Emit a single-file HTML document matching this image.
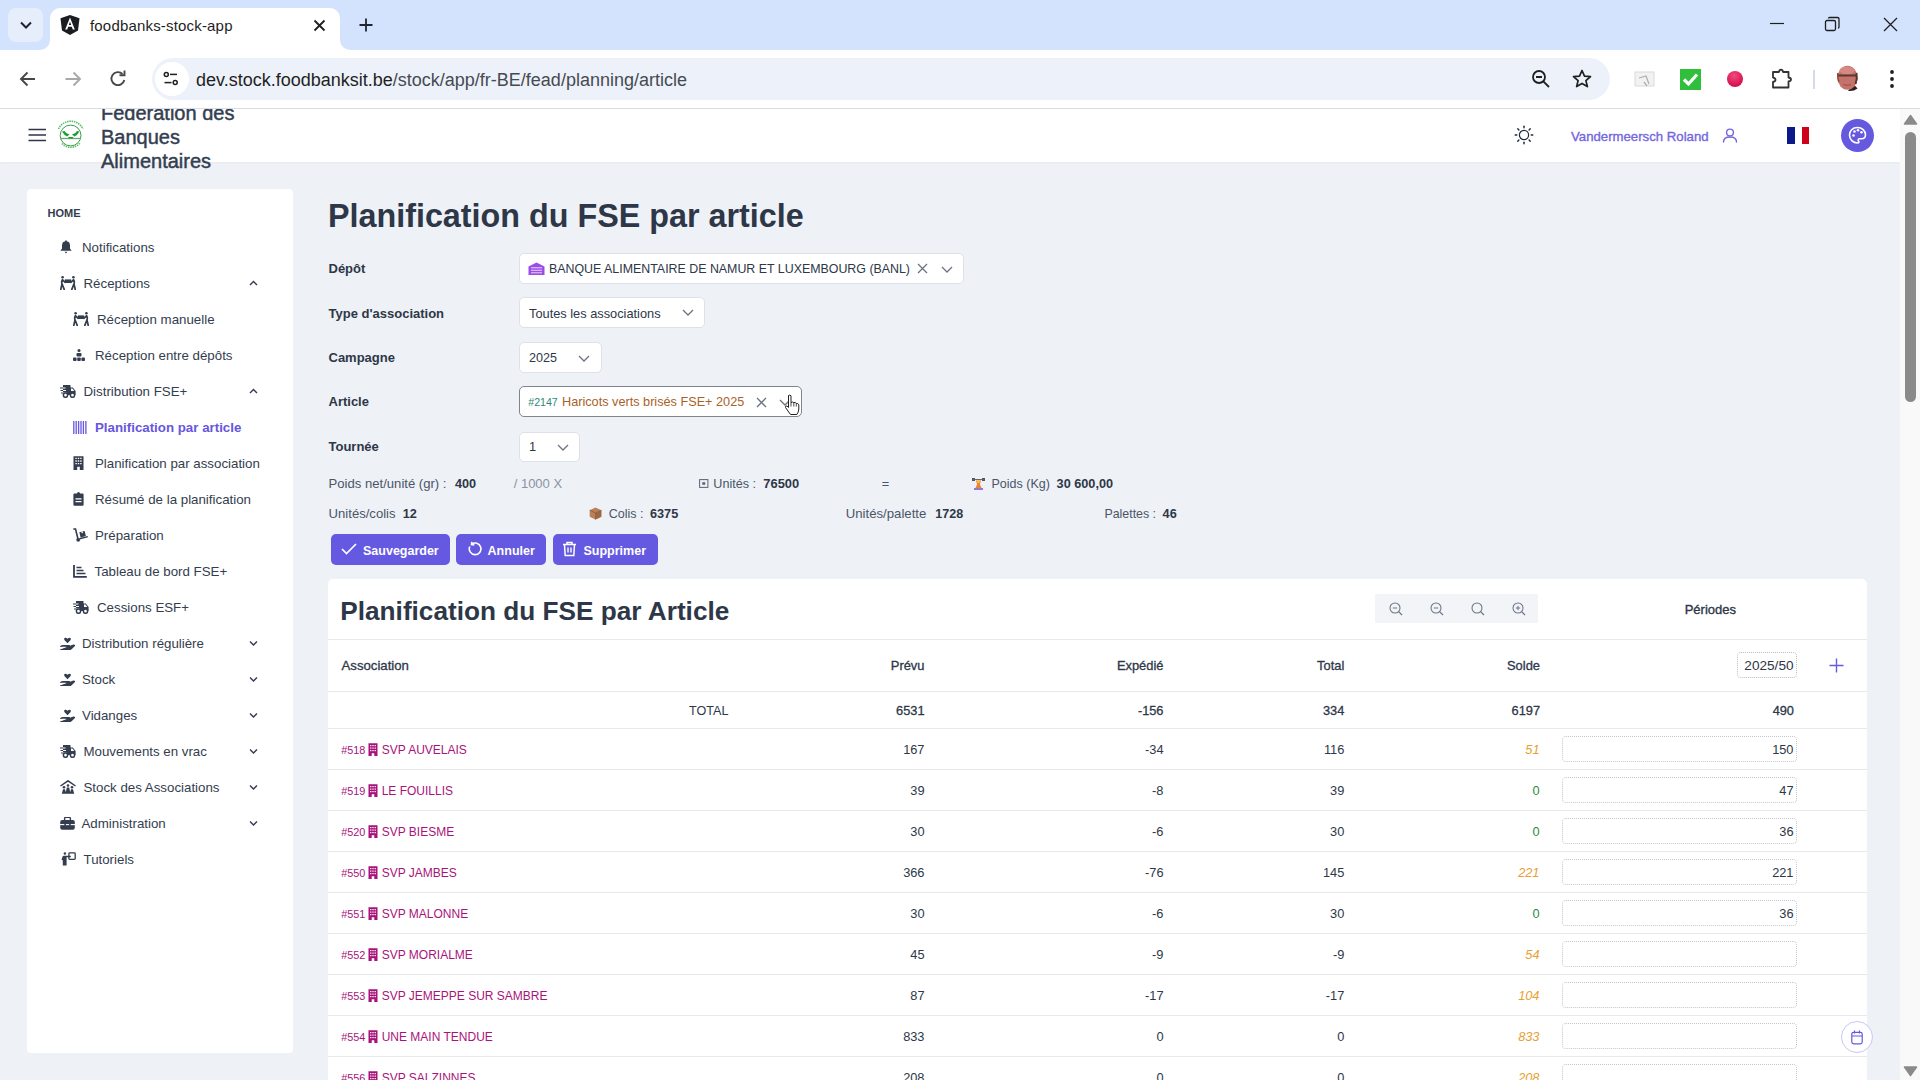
<!DOCTYPE html>
<html><head><meta charset="utf-8">
<style>
*{box-sizing:border-box;margin:0;padding:0}
html,body{width:1920px;height:1080px;overflow:hidden;background:#eef1f6;font-family:"Liberation Sans",sans-serif;color:#2d3748}
.abs{position:absolute}
.t{position:absolute;white-space:nowrap;line-height:1}
#tabbar{position:absolute;left:0;top:0;width:1920px;height:50px;background:#d3e3fd}
#toolbar{position:absolute;left:0;top:50px;width:1920px;height:58px;background:#fff}
#sep{position:absolute;left:0;top:108px;width:1920px;height:1px;background:#d8dce3}
#tab{position:absolute;left:50px;top:8px;width:290px;height:42px;background:#fff;border-radius:10px 10px 0 0}
#url{position:absolute;left:152px;top:58px;width:1458px;height:42px;background:#edf2fa;border-radius:21px}
#app{position:absolute;left:0;top:0;width:1920px;height:1080px;clip-path:inset(109px 0 0 0);background:#eef1f6}
#header{position:absolute;left:0;top:109px;width:1900px;height:53px;background:#fff;box-shadow:0 1px 2px rgba(30,40,60,0.04)}
#sidebar{position:absolute;left:27px;top:189px;width:266px;height:864px;background:#fff;border-radius:4px}
#scroll{position:absolute;left:1900px;top:109px;width:20px;height:971px;background:#f1f1f1}
</style></head><body>
<!-- CHROME -->
<div id="tabbar"></div>
<div class="abs" style="left:8px;top:8px;width:35px;height:34px;border-radius:8px;background:#e6eefc"></div>
<svg class="abs" style="left:18px;top:18px" width="16" height="14" viewBox="0 0 16 14"><path d="M3 4.5 L8 9.5 L13 4.5" fill="none" stroke="#1f2430" stroke-width="2"/></svg>
<div id="tab"></div>
<svg class="abs" style="left:40px;top:40px" width="10" height="10"><path d="M0 10 A10 10 0 0 0 10 0 V10 Z" fill="#fff"/></svg>
<svg class="abs" style="left:340px;top:40px" width="10" height="10"><path d="M10 10 A10 10 0 0 1 0 0 V10 Z" fill="#fff"/></svg>
<svg class="abs" style="left:59px;top:14px" width="22" height="22" viewBox="0 0 22 22"><path d="M11 1 L20.5 4.3 L19 16.5 L11 21 L3 16.5 L1.5 4.3 Z" fill="#1b1c20"/><path d="M11 3.5 L6.2 15.5 H8.2 L9.2 12.8 H12.8 L13.8 15.5 H15.8 Z M11 7.8 L12.2 11 H9.8 Z" fill="#fff"/></svg>
<div class="abs" style="left:90px;top:17px;font-size:15px;color:#1f1f1f;letter-spacing:0.18px">foodbanks-stock-app</div>
<svg class="abs" style="left:313px;top:19px" width="13" height="13" viewBox="0 0 13 13"><path d="M1.5 1.5 L11.5 11.5 M11.5 1.5 L1.5 11.5" stroke="#1f1f1f" stroke-width="1.8"/></svg>
<svg class="abs" style="left:358px;top:17px" width="16" height="16" viewBox="0 0 16 16"><path d="M8 1.5 V14.5 M1.5 8 H14.5" stroke="#1f2430" stroke-width="1.8"/></svg>
<svg class="abs" style="left:1769px;top:18px" width="16" height="10"><path d="M1 5.5 H15" stroke="#1f1f1f" stroke-width="1.2"/></svg>
<svg class="abs" style="left:1824px;top:16px" width="17" height="17" viewBox="0 0 17 17"><rect x="1.5" y="4.5" width="10" height="10" rx="1.5" fill="none" stroke="#1f1f1f" stroke-width="1.3"/><path d="M4.5 2.5 Q4.5 1.5 5.5 1.5 H13.5 Q15 1.5 15 3 V11 Q15 12 14 12" fill="none" stroke="#1f1f1f" stroke-width="1.3"/></svg>
<svg class="abs" style="left:1882px;top:16px" width="17" height="17" viewBox="0 0 17 17"><path d="M2 2 L15 15 M15 2 L2 15" stroke="#1f1f1f" stroke-width="1.3"/></svg>
<div id="toolbar"></div>
<svg class="abs" style="left:18px;top:69px" width="20" height="20" viewBox="0 0 20 20"><path d="M17 10 H4 M9.5 3.5 L3 10 L9.5 16.5" fill="none" stroke="#474747" stroke-width="1.9"/></svg>
<svg class="abs" style="left:63px;top:69px" width="20" height="20" viewBox="0 0 20 20"><path d="M2.5 10 H16 M10.5 3.5 L17 10 L10.5 16.5" fill="none" stroke="#a8a8a8" stroke-width="1.9"/></svg>
<svg class="abs" style="left:108px;top:69px" width="20" height="20" viewBox="0 0 20 20"><path d="M16.3 11 A6.5 6.5 0 1 1 14.5 5" fill="none" stroke="#474747" stroke-width="1.9"/><path d="M11.5 6.3 H16.5 V1.5" fill="none" stroke="#474747" stroke-width="1.9"/></svg>
<div id="url"></div>
<div class="abs" style="left:155px;top:62px;width:34px;height:34px;border-radius:17px;background:#fff"></div>
<svg class="abs" style="left:162px;top:70px" width="18" height="18" viewBox="0 0 18 18"><circle cx="4.3" cy="4.4" r="2" fill="none" stroke="#1f1f1f" stroke-width="1.5"/><path d="M8 4.4 H15" stroke="#1f1f1f" stroke-width="1.5"/><circle cx="13.2" cy="12.6" r="2" fill="none" stroke="#1f1f1f" stroke-width="1.5"/><path d="M2.5 12.6 H9.5" stroke="#1f1f1f" stroke-width="1.5"/></svg>
<div class="abs" id="urltext" style="left:196px;top:69.5px;font-size:18px;color:#1f1f1f;white-space:nowrap">dev.stock.foodbanksit.be<span style="color:#474a52">/stock/app/fr-BE/fead/planning/article</span></div>
<svg class="abs" style="left:1531px;top:69px" width="20" height="20" viewBox="0 0 20 20"><circle cx="8" cy="8" r="6" fill="none" stroke="#1f1f1f" stroke-width="1.8"/><path d="M12.3 12.3 L18 18 M5 8 H11" stroke="#1f1f1f" stroke-width="1.8"/></svg>
<svg class="abs" style="left:1571px;top:68px" width="22" height="22" viewBox="0 0 22 22"><path d="M11 2.5 L13.5 8.2 L19.5 8.6 L14.9 12.6 L16.4 18.6 L11 15.4 L5.6 18.6 L7.1 12.6 L2.5 8.6 L8.5 8.2 Z" fill="none" stroke="#1f1f1f" stroke-width="1.7" stroke-linejoin="round"/></svg>
<svg class="abs" style="left:1634px;top:70px" width="22" height="18" viewBox="0 0 22 18"><rect x="1" y="2" width="19" height="14" fill="#f2f2f2" stroke="#dadada"/><path d="M5 8 L12 6 L15 14 M10 12 L13 16" stroke="#b0b0b0" stroke-width="1.3" fill="none"/></svg>
<div class="abs" style="left:1680px;top:69px;width:21px;height:21px;background:#2fbf3a"></div>
<svg class="abs" style="left:1680px;top:69px" width="21" height="21" viewBox="0 0 21 21"><path d="M4 10.5 L8.5 15 L17 5.5" fill="none" stroke="#fff" stroke-width="3.2"/></svg>
<div class="abs" style="left:1727px;top:71px;width:16px;height:16px;border-radius:8px;background:radial-gradient(circle at 45% 30%,#f04a80,#d8104f 70%)"></div>
<svg class="abs" style="left:1770px;top:67px" width="23" height="23" viewBox="0 0 23 23"><path d="M3 5 H9 Q9.3 2.6 11 2.6 Q12.7 2.6 13 5 H18.5 V10.5 Q21 10.8 21 12.5 Q21 14.2 18.5 14.5 V20.5 H3 V14.8 Q5.5 14.5 5.5 12.7 Q5.5 10.9 3 10.6 Z" fill="none" stroke="#333" stroke-width="1.8" stroke-linejoin="round"/></svg>
<div class="abs" style="left:1813px;top:70px;width:2px;height:19px;background:#d3dbe8"></div>
<svg class="abs" style="left:1836px;top:65px" width="24" height="27" viewBox="0 0 24 27"><path d="M17.5 19 L21.5 23.5 Q18 26.5 12 26 Z" fill="#2a1f1c"/><ellipse cx="11.5" cy="12.8" rx="10" ry="12" fill="#c4726a"/><ellipse cx="11" cy="5.5" rx="7.5" ry="4" fill="#d48a82"/><path d="M2 10.5 H20.5" stroke="#5a3a30" stroke-width="2"/><path d="M1.8 8 Q1.5 14 3 17" stroke="#8a4a3a" stroke-width="1.5" fill="none"/><path d="M20.5 8 Q21.5 14 19.5 19" stroke="#5a3528" stroke-width="2" fill="none"/><path d="M7.5 19.5 Q11.5 21 15 19.5" stroke="#9a5050" stroke-width="1.2" fill="none"/></svg>
<svg class="abs" style="left:1886px;top:69px" width="12" height="20" viewBox="0 0 12 20"><circle cx="6" cy="3" r="1.9" fill="#1f1f1f"/><circle cx="6" cy="10" r="1.9" fill="#1f1f1f"/><circle cx="6" cy="17" r="1.9" fill="#1f1f1f"/></svg>
<div id="sep"></div>
<div id="app">
<!-- APP HEADER -->
<div id="header"></div>
<svg class="abs" style="left:28px;top:128px" width="19" height="14" viewBox="0 0 19 14"><path d="M0.5 1.5 H18 M0.5 7 H18 M0.5 12.5 H18" stroke="#2d3748" stroke-width="1.6"/></svg>
<svg class="abs" style="left:54px;top:119px" width="34" height="34" viewBox="0 0 34 34"><circle cx="16.6" cy="16.5" r="10.4" fill="none" stroke="#3a9a4a" stroke-width="1"/><path d="M4.5 10 A13.5 13.5 0 0 1 29 10" fill="none" stroke="#5cc06a" stroke-width="1.6" stroke-dasharray="1.5 0.8"/><path d="M8 24.5 A12 12 0 0 0 26 24" fill="none" stroke="#5cc06a" stroke-width="1.6" stroke-dasharray="1.5 0.8"/><path d="M6.5 19.5 H27" stroke="#6aa870" stroke-width="1.3"/><path d="M8 12.5 Q10 16 13 17.5 L15.5 15.5 Q12 15 10.5 12 Z M25.5 12.5 Q23.5 16 20.5 17.5 L18 15.5 Q21.5 15 23 12 Z M14 18 H19.5 L18.5 19.5 H15 Z" fill="#1aa033"/></svg>
<div class="t" style="left:101px;top:101px;font-size:20px;line-height:24px;color:#333e50;width:200px;white-space:normal;-webkit-text-stroke:0.45px #333e50">Fédération des<br>Banques<br>Alimentaires</div>
<!-- SIDEBAR -->
<div id="sidebar"></div>
<div class="t" style="left:47.5px;top:208px;font-size:11px;font-weight:700;color:#333d4e;">HOME</div>
<div class="abs" style="left:60px;top:240.0px;line-height:0"><svg width="12" height="14" viewBox="0 0 12 14"><path d="M6 0.3 Q6.8 0.3 6.8 1.2 Q10 1.8 10 5.5 V8.5 L11.6 10.8 H0.4 L2 8.5 V5.5 Q2 1.8 5.2 1.2 Q5.2 0.3 6 0.3 Z" fill="#333d4e"/><path d="M4.6 11.8 H7.4 L6 13.6 Z" fill="#333d4e"/></svg></div>
<div class="t" style="left:82px;top:241px;font-size:13.3px;font-weight:400;color:#333d4e;">Notifications</div>
<div class="abs" style="left:60px;top:276.0px;line-height:0"><svg width="16" height="14" viewBox="0 0 16 14"><circle cx="2.6" cy="1.3" r="1.3" fill="#333d4e"/><circle cx="13.4" cy="1.3" r="1.3" fill="#333d4e"/><rect x="4.8" y="3.4" width="6.4" height="3.6" fill="#333d4e"/><path d="M2.4 3.6 Q1.2 5.5 2 8 L0.8 13.4 M2.2 8.2 L4.2 13.4 M2.6 4 L5.2 6.3 M13.6 3.6 Q14.8 5.5 14 8 L15.2 13.4 M13.8 8.2 L11.8 13.4 M13.4 4 L10.8 6.3" stroke="#333d4e" stroke-width="1.7" fill="none" stroke-linecap="round"/></svg></div>
<div class="t" style="left:83.5px;top:277px;font-size:13.3px;font-weight:400;color:#333d4e;">Réceptions</div>
<svg class="abs" style="left:249px;top:279.5px" width="9" height="7" viewBox="0 0 9 7"><path d="M1 5 L4.5 1.5 L8 5" fill="none" stroke="#333d4e" stroke-width="1.4"/></svg>
<div class="abs" style="left:73px;top:312.0px;line-height:0"><svg width="16" height="14" viewBox="0 0 16 14"><circle cx="2.6" cy="1.3" r="1.3" fill="#333d4e"/><circle cx="13.4" cy="1.3" r="1.3" fill="#333d4e"/><rect x="4.8" y="3.4" width="6.4" height="3.6" fill="#333d4e"/><path d="M2.4 3.6 Q1.2 5.5 2 8 L0.8 13.4 M2.2 8.2 L4.2 13.4 M2.6 4 L5.2 6.3 M13.6 3.6 Q14.8 5.5 14 8 L15.2 13.4 M13.8 8.2 L11.8 13.4 M13.4 4 L10.8 6.3" stroke="#333d4e" stroke-width="1.7" fill="none" stroke-linecap="round"/></svg></div>
<div class="t" style="left:97px;top:313px;font-size:13.3px;font-weight:400;color:#333d4e;">Réception manuelle</div>
<div class="abs" style="left:73px;top:349.0px;line-height:0"><svg width="12" height="12" viewBox="0 0 12 12"><circle cx="6" cy="1.5" r="1.5" fill="#333d4e"/><rect x="3.5" y="4" width="5" height="3.5" rx="1" fill="#333d4e"/><rect x="0" y="8.5" width="3.6" height="3.5" rx="1" fill="#333d4e"/><rect x="4.2" y="8.5" width="3.6" height="3.5" rx="1" fill="#333d4e"/><rect x="8.4" y="8.5" width="3.6" height="3.5" rx="1" fill="#333d4e"/></svg></div>
<div class="t" style="left:95px;top:349px;font-size:13.3px;font-weight:400;color:#333d4e;">Réception entre dépôts</div>
<div class="abs" style="left:60px;top:384.0px;line-height:0"><svg width="16" height="14" viewBox="0 0 16 14"><path d="M3 1 H10.5 V3.5 H12.8 L15.6 7 V11 H3 Z" fill="#333d4e"/><path d="M0 4 H5.5 M0.5 6.5 H6 M1 9 H6.5" stroke="#fff" stroke-width="1.1"/><path d="M0 4 H3 M0.5 6.5 H3 M1 9 H3" stroke="#333d4e" stroke-width="1.1"/><circle cx="5.5" cy="11.2" r="2.1" fill="#fff" stroke="#333d4e" stroke-width="1.5"/><circle cx="12.5" cy="11.2" r="2.1" fill="#fff" stroke="#333d4e" stroke-width="1.5"/><path d="M11 4.6 H12.4 L14.3 7 H11 Z" fill="#fff"/></svg></div>
<div class="t" style="left:83.5px;top:385px;font-size:13.3px;font-weight:400;color:#333d4e;">Distribution FSE+</div>
<svg class="abs" style="left:249px;top:387.5px" width="9" height="7" viewBox="0 0 9 7"><path d="M1 5 L4.5 1.5 L8 5" fill="none" stroke="#333d4e" stroke-width="1.4"/></svg>
<div class="abs" style="left:73px;top:420.5px;line-height:0"><svg width="14" height="13" viewBox="0 0 14 13"><path d="M0.8 0 V13 M3.2 0 V13 M5.6 0 V13 M8 0 V13 M10.4 0 V13 M12.9 0 V13" stroke="#6656e0" stroke-width="1.3"/></svg></div>
<div class="t" style="left:95px;top:421px;font-size:13.3px;font-weight:700;color:#6656e0;">Planification par article</div>
<div class="abs" style="left:73px;top:456.0px;line-height:0"><svg width="11" height="14" viewBox="0 0 11 14"><path d="M0.5 0.3 H10.5 V14 H6.8 V10.8 H4.2 V14 H0.5 Z" fill="#333d4e"/><path d="M2.4 2.4 H3.8 M4.8 2.4 H6.2 M7.2 2.4 H8.6 M2.4 5 H3.8 M4.8 5 H6.2 M7.2 5 H8.6 M2.4 7.6 H3.8 M4.8 7.6 H6.2 M7.2 7.6 H8.6" stroke="#fff" stroke-width="1.3"/></svg></div>
<div class="t" style="left:95px;top:457px;font-size:13.3px;font-weight:400;color:#333d4e;">Planification par association</div>
<div class="abs" style="left:73px;top:492.0px;line-height:0"><svg width="11" height="14" viewBox="0 0 11 14"><path d="M1.5 1.5 H3.8 Q4.2 0 5.5 0 Q6.8 0 7.2 1.5 H9.5 Q10.6 1.5 10.6 2.6 V12.8 Q10.6 13.8 9.5 13.8 H1.5 Q0.4 13.8 0.4 12.8 V2.6 Q0.4 1.5 1.5 1.5 Z" fill="#333d4e"/><path d="M2.5 6.8 H8.5 M2.5 9.6 H8.5" stroke="#fff" stroke-width="1.2"/></svg></div>
<div class="t" style="left:95px;top:493px;font-size:13.3px;font-weight:400;color:#333d4e;">Résumé de la planification</div>
<div class="abs" style="left:73px;top:528.0px;line-height:0"><svg width="15" height="14" viewBox="0 0 15 14"><path d="M0.3 1 H2.5 L5 11" stroke="#333d4e" stroke-width="1.6" fill="none"/><circle cx="5.2" cy="11.8" r="1.9" fill="#333d4e"/><path d="M6.5 10.8 L14.8 8.6" stroke="#333d4e" stroke-width="1.5"/><path d="M6.3 4.3 L11.6 3 L12.9 8 L7.6 9.4 Z" fill="#333d4e"/><path d="M8.3 3.8 L9.6 3.5 L10 5 L8.7 5.3 Z" fill="#fff"/></svg></div>
<div class="t" style="left:95px;top:529px;font-size:13.3px;font-weight:400;color:#333d4e;">Préparation</div>
<div class="abs" style="left:73px;top:564.5px;line-height:0"><svg width="14" height="13" viewBox="0 0 14 13"><path d="M1 0 V11.8 H13.8" stroke="#333d4e" stroke-width="1.8" fill="none"/><path d="M3.5 2.5 H8.5 M3.5 5.5 H10.5 M3.5 8.5 H12.5" stroke="#333d4e" stroke-width="1.5"/></svg></div>
<div class="t" style="left:94.5px;top:565px;font-size:13.3px;font-weight:400;color:#333d4e;">Tableau de bord FSE+</div>
<div class="abs" style="left:73px;top:600.0px;line-height:0"><svg width="16" height="14" viewBox="0 0 16 14"><path d="M3 1 H10.5 V3.5 H12.8 L15.6 7 V11 H3 Z" fill="#333d4e"/><path d="M0 4 H5.5 M0.5 6.5 H6 M1 9 H6.5" stroke="#fff" stroke-width="1.1"/><path d="M0 4 H3 M0.5 6.5 H3 M1 9 H3" stroke="#333d4e" stroke-width="1.1"/><circle cx="5.5" cy="11.2" r="2.1" fill="#fff" stroke="#333d4e" stroke-width="1.5"/><circle cx="12.5" cy="11.2" r="2.1" fill="#fff" stroke="#333d4e" stroke-width="1.5"/><path d="M11 4.6 H12.4 L14.3 7 H11 Z" fill="#fff"/></svg></div>
<div class="t" style="left:97px;top:601px;font-size:13.3px;font-weight:400;color:#333d4e;">Cessions ESF+</div>
<div class="abs" style="left:60px;top:636.5px;line-height:0"><svg width="15" height="13" viewBox="0 0 15 13"><path d="M7.5 6.3 L4.6 3.3 Q3.6 2.1 4.5 1.1 Q5.6 0 7.5 1.7 Q9.4 0 10.5 1.1 Q11.4 2.1 10.4 3.3 Z" fill="#333d4e"/><path d="M0.3 9.6 Q1.5 8.6 3.5 8.6 H9 Q10 8.7 9.6 9.7 H6.5 M9.3 9.8 L12.8 8.2 Q14.4 7.8 14.6 8.6 L11 12 Q10.2 13 9 13 H0.3 Z" fill="#333d4e" stroke="#333d4e" stroke-width="1.1" stroke-linejoin="round"/></svg></div>
<div class="t" style="left:82px;top:637px;font-size:13.3px;font-weight:400;color:#333d4e;">Distribution régulière</div>
<svg class="abs" style="left:249px;top:639.5px" width="9" height="7" viewBox="0 0 9 7"><path d="M1 1.5 L4.5 5 L8 1.5" fill="none" stroke="#333d4e" stroke-width="1.4"/></svg>
<div class="abs" style="left:60px;top:672.5px;line-height:0"><svg width="15" height="13" viewBox="0 0 15 13"><path d="M7.5 6.3 L4.6 3.3 Q3.6 2.1 4.5 1.1 Q5.6 0 7.5 1.7 Q9.4 0 10.5 1.1 Q11.4 2.1 10.4 3.3 Z" fill="#333d4e"/><path d="M0.3 9.6 Q1.5 8.6 3.5 8.6 H9 Q10 8.7 9.6 9.7 H6.5 M9.3 9.8 L12.8 8.2 Q14.4 7.8 14.6 8.6 L11 12 Q10.2 13 9 13 H0.3 Z" fill="#333d4e" stroke="#333d4e" stroke-width="1.1" stroke-linejoin="round"/></svg></div>
<div class="t" style="left:82px;top:673px;font-size:13.3px;font-weight:400;color:#333d4e;">Stock</div>
<svg class="abs" style="left:249px;top:675.5px" width="9" height="7" viewBox="0 0 9 7"><path d="M1 1.5 L4.5 5 L8 1.5" fill="none" stroke="#333d4e" stroke-width="1.4"/></svg>
<div class="abs" style="left:60px;top:708.5px;line-height:0"><svg width="15" height="13" viewBox="0 0 15 13"><path d="M7.5 6.3 L4.6 3.3 Q3.6 2.1 4.5 1.1 Q5.6 0 7.5 1.7 Q9.4 0 10.5 1.1 Q11.4 2.1 10.4 3.3 Z" fill="#333d4e"/><path d="M0.3 9.6 Q1.5 8.6 3.5 8.6 H9 Q10 8.7 9.6 9.7 H6.5 M9.3 9.8 L12.8 8.2 Q14.4 7.8 14.6 8.6 L11 12 Q10.2 13 9 13 H0.3 Z" fill="#333d4e" stroke="#333d4e" stroke-width="1.1" stroke-linejoin="round"/></svg></div>
<div class="t" style="left:82px;top:709px;font-size:13.3px;font-weight:400;color:#333d4e;">Vidanges</div>
<svg class="abs" style="left:249px;top:711.5px" width="9" height="7" viewBox="0 0 9 7"><path d="M1 1.5 L4.5 5 L8 1.5" fill="none" stroke="#333d4e" stroke-width="1.4"/></svg>
<div class="abs" style="left:60px;top:744.0px;line-height:0"><svg width="16" height="14" viewBox="0 0 16 14"><path d="M3 1 H10.5 V3.5 H12.8 L15.6 7 V11 H3 Z" fill="#333d4e"/><path d="M0 4 H5.5 M0.5 6.5 H6 M1 9 H6.5" stroke="#fff" stroke-width="1.1"/><path d="M0 4 H3 M0.5 6.5 H3 M1 9 H3" stroke="#333d4e" stroke-width="1.1"/><circle cx="5.5" cy="11.2" r="2.1" fill="#fff" stroke="#333d4e" stroke-width="1.5"/><circle cx="12.5" cy="11.2" r="2.1" fill="#fff" stroke="#333d4e" stroke-width="1.5"/><path d="M11 4.6 H12.4 L14.3 7 H11 Z" fill="#fff"/></svg></div>
<div class="t" style="left:83.5px;top:745px;font-size:13.3px;font-weight:400;color:#333d4e;">Mouvements en vrac</div>
<svg class="abs" style="left:249px;top:747.5px" width="9" height="7" viewBox="0 0 9 7"><path d="M1 1.5 L4.5 5 L8 1.5" fill="none" stroke="#333d4e" stroke-width="1.4"/></svg>
<div class="abs" style="left:60px;top:780.0px;line-height:0"><svg width="16" height="14" viewBox="0 0 16 14"><path d="M0.5 6 L8 0.8 L15.5 6" stroke="#333d4e" stroke-width="1.5" fill="none"/><circle cx="4" cy="7.3" r="1.3" fill="#333d4e"/><circle cx="8" cy="5.5" r="1.3" fill="#333d4e"/><circle cx="12" cy="7.3" r="1.3" fill="#333d4e"/><path d="M1.8 13.8 L3 9.2 H5 L6.2 13.8 Z M5.5 13.8 L6.8 7.5 H9.2 L10.5 13.8 Z M9.8 13.8 L11 9.2 H13 L14.2 13.8 Z" fill="#333d4e"/></svg></div>
<div class="t" style="left:83.5px;top:781px;font-size:13.3px;font-weight:400;color:#333d4e;">Stock des Associations</div>
<svg class="abs" style="left:249px;top:783.5px" width="9" height="7" viewBox="0 0 9 7"><path d="M1 1.5 L4.5 5 L8 1.5" fill="none" stroke="#333d4e" stroke-width="1.4"/></svg>
<div class="abs" style="left:60px;top:816.5px;line-height:0"><svg width="15" height="13" viewBox="0 0 15 13"><path d="M4.6 3 V1.6 Q4.6 0.4 5.8 0.4 H9.2 Q10.4 0.4 10.4 1.6 V3" stroke="#333d4e" stroke-width="1.4" fill="none"/><rect x="0.2" y="3" width="14.6" height="9.8" rx="2" fill="#333d4e"/><path d="M0 7.6 H15" stroke="#fff" stroke-width="1.1"/><rect x="4.3" y="6.6" width="1.6" height="2.2" fill="#333d4e"/><rect x="9.1" y="6.6" width="1.6" height="2.2" fill="#333d4e"/></svg></div>
<div class="t" style="left:81.5px;top:817px;font-size:13.3px;font-weight:400;color:#333d4e;">Administration</div>
<svg class="abs" style="left:249px;top:819.5px" width="9" height="7" viewBox="0 0 9 7"><path d="M1 1.5 L4.5 5 L8 1.5" fill="none" stroke="#333d4e" stroke-width="1.4"/></svg>
<div class="abs" style="left:60px;top:851.5px;line-height:0"><svg width="16" height="15" viewBox="0 0 16 15"><circle cx="4.9" cy="1.5" r="1.2" fill="#333d4e"/><path d="M1.5 8 L2.6 4.6 Q2.9 3.8 3.8 3.8 H10.8 V5.2 H6.6 V13.5 H2.8 V8.2 Z" fill="#333d4e"/><rect x="8.9" y="0.9" width="6.3" height="6.5" rx="0.8" fill="none" stroke="#333d4e" stroke-width="1.3"/></svg></div>
<div class="t" style="left:83.5px;top:853px;font-size:13.3px;font-weight:400;color:#333d4e;">Tutoriels</div>
<!-- MAIN -->
<svg class="abs" style="left:1513px;top:124px" width="22" height="22" viewBox="0 0 22 22"><circle cx="11" cy="11" r="4.6" fill="none" stroke="#1f2937" stroke-width="1.2"/><path d="M18.20 11.00 L19.80 11.00" stroke="#1f2937" stroke-width="1.4" stroke-linecap="round"/><path d="M16.09 16.09 L17.22 17.22" stroke="#1f2937" stroke-width="1.4" stroke-linecap="round"/><path d="M11.00 18.20 L11.00 19.80" stroke="#1f2937" stroke-width="1.4" stroke-linecap="round"/><path d="M5.91 16.09 L4.78 17.22" stroke="#1f2937" stroke-width="1.4" stroke-linecap="round"/><path d="M3.80 11.00 L2.20 11.00" stroke="#1f2937" stroke-width="1.4" stroke-linecap="round"/><path d="M5.91 5.91 L4.78 4.78" stroke="#1f2937" stroke-width="1.4" stroke-linecap="round"/><path d="M11.00 3.80 L11.00 2.20" stroke="#1f2937" stroke-width="1.4" stroke-linecap="round"/><path d="M16.09 5.91 L17.22 4.78" stroke="#1f2937" stroke-width="1.4" stroke-linecap="round"/></svg>
<div class="t" style="left:1571px;top:130px;font-size:13.2px;font-weight:400;color:#7466e0;-webkit-text-stroke:0.35px #7466e0">Vandermeersch Roland</div>
<svg class="abs" style="left:1722px;top:128px" width="16" height="15" viewBox="0 0 16 15"><circle cx="8" cy="4.5" r="3.4" fill="none" stroke="#7466e0" stroke-width="1.4"/><path d="M1.5 14 Q1.5 9 8 9 Q14.5 9 14.5 14" fill="none" stroke="#7466e0" stroke-width="1.4" stroke-linecap="round"/></svg>
<div class="abs" style="left:1787px;top:127px;width:8px;height:17px;background:#0a1a8a"></div>
<div class="abs" style="left:1795px;top:127px;width:7px;height:17px;background:#fff"></div>
<div class="abs" style="left:1802px;top:127px;width:7px;height:17px;background:#d0021b"></div>
<div class="abs" style="left:1841px;top:119px;width:33px;height:33px;border-radius:50%;background:#6559e0"></div>
<svg class="abs" style="left:1847px;top:125px" width="21" height="21" viewBox="0 0 21 21"><path d="M10.5 2.5 C5.5 2.5 2.5 6 2.5 10 C2.5 14.5 6 18 10.5 18 C12 18 12.3 17 11.5 16 C10.8 15 11.3 13.8 12.6 13.8 H14.5 C16.8 13.8 18.5 12.2 18.5 9.8 C18.5 5.5 15 2.5 10.5 2.5 Z" fill="none" stroke="#fff" stroke-width="1.6"/><circle cx="6.5" cy="10.5" r="1.3" fill="#fff"/><circle cx="7.5" cy="6.5" r="1.3" fill="#fff"/><circle cx="11" cy="5.3" r="1.3" fill="#fff"/><circle cx="14.5" cy="7.3" r="1.3" fill="#fff"/></svg>
<div class="t" style="left:328px;top:200px;font-size:32.3px;font-weight:700;color:#2d3748;">Planification du FSE par article</div>
<div class="t" style="left:328.5px;top:262px;font-size:13px;font-weight:700;color:#2d3748;">Dépôt</div>
<div class="t" style="left:328.5px;top:307px;font-size:13px;font-weight:700;color:#2d3748;">Type d'association</div>
<div class="t" style="left:328.5px;top:351px;font-size:13px;font-weight:700;color:#2d3748;">Campagne</div>
<div class="t" style="left:328.5px;top:395px;font-size:13px;font-weight:700;color:#2d3748;">Article</div>
<div class="t" style="left:328.5px;top:440px;font-size:13px;font-weight:700;color:#2d3748;">Tournée</div>
<div class="abs" style="left:519px;top:253px;width:445px;height:31px;background:#fff;border:1px solid #dde2ea;border-radius:5px"></div>
<svg class="abs" style="left:528px;top:262px" width="17" height="13" viewBox="0 0 17 13"><path d="M0.5 4.5 L8.5 0.5 L16.5 4.5 V13 H0.5 Z" fill="#9b4de8"/><path d="M3 5.8 H14 M3 8.3 H14 M3 10.8 H14" stroke="#e9d8fb" stroke-width="1"/></svg>
<div class="t" style="left:549px;top:263px;font-size:12.4px;font-weight:400;color:#2d3748;">BANQUE ALIMENTAIRE DE NAMUR ET LUXEMBOURG (BANL)</div>
<svg class="abs" style="left:917px;top:263px" width="11" height="11" viewBox="0 0 11 11"><path d="M1 1 L10 10 M10 1 L1 10" stroke="#6b7280" stroke-width="1.3"/></svg>
<svg class="abs" style="left:941px;top:266px" width="12" height="7" viewBox="0 0 12 7"><path d="M1 1 L6 6 L11 1" fill="none" stroke="#6b7280" stroke-width="1.3"/></svg>
<div class="abs" style="left:519px;top:297px;width:186px;height:31px;background:#fff;border:1px solid #dde2ea;border-radius:5px"></div>
<div class="t" style="left:529px;top:308px;font-size:12.8px;font-weight:400;color:#2d3748;">Toutes les associations</div>
<svg class="abs" style="left:682px;top:309px" width="12" height="7" viewBox="0 0 12 7"><path d="M1 1 L6 6 L11 1" fill="none" stroke="#6b7280" stroke-width="1.3"/></svg>
<div class="abs" style="left:519px;top:342px;width:83px;height:31px;background:#fff;border:1px solid #dde2ea;border-radius:5px"></div>
<div class="t" style="left:529px;top:352px;font-size:12.6px;font-weight:400;color:#2d3748;">2025</div>
<svg class="abs" style="left:578px;top:355px" width="12" height="7" viewBox="0 0 12 7"><path d="M1 1 L6 6 L11 1" fill="none" stroke="#6b7280" stroke-width="1.3"/></svg>
<div class="abs" style="left:519px;top:386px;width:283px;height:31px;background:#fff;border:1px solid #80858d;border-radius:5px"></div>
<div class="t" style="left:528.3px;top:397px;font-size:10.6px;font-weight:400;color:#2e8a78;">#2147</div>
<div class="t" style="left:562px;top:396px;font-size:12.7px;font-weight:400;color:#a86228;">Haricots verts brisés FSE+ 2025</div>
<svg class="abs" style="left:756px;top:397px" width="11" height="11" viewBox="0 0 11 11"><path d="M1 1 L10 10 M10 1 L1 10" stroke="#6b7280" stroke-width="1.3"/></svg>
<svg class="abs" style="left:779px;top:399px" width="12" height="7" viewBox="0 0 12 7"><path d="M1 1 L6 6 L11 1" fill="none" stroke="#6b7280" stroke-width="1.3"/></svg>
<svg class="abs" style="left:784px;top:394px" width="16" height="22" viewBox="0 0 16 22"><path d="M4.5 1.5 Q6 0.5 7 1.8 V8.5 Q8.5 7.5 9.8 8.6 Q11.4 8 12.3 9.4 Q14 9 14.8 10.8 V15 Q14.8 18 12.8 20.5 H6.5 L1.5 13.5 Q1 11.8 3 12 L4.5 13.5 Z" fill="#fff" stroke="#222" stroke-width="1"/><path d="M7 8.5 V12.5 M9.8 8.6 V12.5 M12.3 9.4 V12.5" stroke="#222" stroke-width="0.8"/></svg>
<div class="abs" style="left:519px;top:432px;width:61px;height:30px;background:#fff;border:1px solid #dde2ea;border-radius:5px"></div>
<div class="t" style="left:529px;top:441px;font-size:12.8px;font-weight:400;color:#2d3748;">1</div>
<svg class="abs" style="left:557px;top:444px" width="12" height="7" viewBox="0 0 12 7"><path d="M1 1 L6 6 L11 1" fill="none" stroke="#6b7280" stroke-width="1.3"/></svg>
<div class="t" style="left:328.6px;top:477px;font-size:13.1px;font-weight:400;color:#4a5568;">Poids net/unité (gr) :</div>
<div class="t" style="left:455px;top:478px;font-size:12.7px;font-weight:700;color:#2d3748;">400</div>
<div class="t" style="left:513.7px;top:477px;font-size:13px;font-weight:400;color:#8a94a3;">/ 1000 X</div>
<svg class="abs" style="left:699px;top:479px" width="10" height="9" viewBox="0 0 10 9"><rect x="0.6" y="0.6" width="8.3" height="7.8" fill="none" stroke="#5a6474" stroke-width="1"/><rect x="3.3" y="3.2" width="2.9" height="2.6" fill="#5a6474"/></svg>
<div class="t" style="left:713.3px;top:478px;font-size:12.6px;font-weight:400;color:#4a5568;">Unités :</div>
<div class="t" style="left:763.3px;top:478px;font-size:12.9px;font-weight:700;color:#2d3748;">76500</div>
<div class="t" style="left:881.7px;top:478px;font-size:12.8px;font-weight:400;color:#4a5568;">=</div>
<svg class="abs" style="left:971px;top:476px" width="15" height="15" viewBox="0 0 15 15"><rect x="1" y="2" width="3" height="3" fill="#555"/><rect x="11" y="2" width="3" height="3" fill="#555"/><path d="M2.5 3.5 H12.5" stroke="#666" stroke-width="1"/><path d="M4.8 4.5 H10.2 L8.8 8 L10.5 12 H4.5 L6.2 8 Z" fill="#f0832a"/><circle cx="7.5" cy="5.5" r="1.4" fill="#f5c84c"/><path d="M3 13 H12" stroke="#7a5bd0" stroke-width="1.6"/></svg>
<div class="t" style="left:991.5px;top:478px;font-size:12.5px;font-weight:400;color:#4a5568;">Poids (Kg)</div>
<div class="t" style="left:1056.6px;top:478px;font-size:12.7px;font-weight:700;color:#2d3748;">30 600,00</div>
<div class="t" style="left:328.6px;top:507px;font-size:13.1px;font-weight:400;color:#4a5568;">Unités/colis</div>
<div class="t" style="left:402.8px;top:508px;font-size:12.7px;font-weight:700;color:#2d3748;">12</div>
<svg class="abs" style="left:589px;top:507px" width="13" height="13" viewBox="0 0 13 13"><path d="M6.5 0.5 L12.3 3.2 V9.8 L6.5 12.5 L0.7 9.8 V3.2 Z" fill="#b9805a"/><path d="M0.7 3.2 L6.5 6 L12.3 3.2 M6.5 6 V12.5" stroke="#8c5a3a" stroke-width="0.8" fill="none"/><path d="M6.5 6 L12.3 3.2 V9.8 L6.5 12.5 Z" fill="#9c6844"/></svg>
<div class="t" style="left:608.7px;top:508px;font-size:12.5px;font-weight:400;color:#4a5568;">Colis :</div>
<div class="t" style="left:650px;top:508px;font-size:12.7px;font-weight:700;color:#2d3748;">6375</div>
<div class="t" style="left:845.7px;top:507px;font-size:13.2px;font-weight:400;color:#4a5568;">Unités/palette</div>
<div class="t" style="left:935.3px;top:508px;font-size:12.5px;font-weight:700;color:#2d3748;">1728</div>
<div class="t" style="left:1104.4px;top:508px;font-size:12.4px;font-weight:400;color:#4a5568;">Palettes :</div>
<div class="t" style="left:1162.6px;top:508px;font-size:12.7px;font-weight:700;color:#2d3748;">46</div>
<div class="abs" style="left:331px;top:534px;width:119px;height:31px;background:#6459e0;border-radius:5px"></div>
<div class="abs" style="left:456px;top:534px;width:90px;height:31px;background:#6459e0;border-radius:5px"></div>
<div class="abs" style="left:553px;top:534px;width:105px;height:31px;background:#6459e0;border-radius:5px"></div>
<div class="t" style="left:363px;top:545px;font-size:12.5px;font-weight:700;color:#fff;">Sauvegarder</div>
<div class="t" style="left:487.6px;top:545px;font-size:12.5px;font-weight:700;color:#fff;">Annuler</div>
<div class="t" style="left:583.5px;top:545px;font-size:12.5px;font-weight:700;color:#fff;">Supprimer</div>
<svg class="abs" style="left:341px;top:543px" width="16" height="12" viewBox="0 0 16 12"><path d="M1 6 L5.5 10.5 L15 1" fill="none" stroke="#fff" stroke-width="1.7"/></svg>
<svg class="abs" style="left:466px;top:541px" width="16" height="16" viewBox="0 0 16 16"><path d="M3.8 5.5 A5.8 5.8 0 1 0 5.5 3.3" fill="none" stroke="#fff" stroke-width="1.6"/><path d="M5.8 0.8 L5.5 3.6 L8.4 4" fill="none" stroke="#fff" stroke-width="1.6"/></svg>
<svg class="abs" style="left:562px;top:541px" width="15" height="16" viewBox="0 0 15 16"><path d="M1 3.5 H14 M5 3.5 V1.5 H10 V3.5" fill="none" stroke="#fff" stroke-width="1.5"/><path d="M2.5 3.5 L3.2 14.5 H11.8 L12.5 3.5" fill="none" stroke="#fff" stroke-width="1.5"/><path d="M6 6.5 V11.5 M9 6.5 V11.5" stroke="#fff" stroke-width="1.4"/></svg>
<!-- TABLE -->
<div class="abs" style="left:328px;top:579px;width:1539px;height:511px;background:#fff;border-radius:5px"></div>
<div class="t" style="left:340.3px;top:598px;font-size:26.2px;font-weight:700;color:#2d3748;">Planification du FSE par Article</div>
<div class="abs" style="left:1375px;top:594px;width:163px;height:29px;background:#f2f4f8;border-radius:1px"></div>
<svg class="abs" style="left:1388.5px;top:602px" width="14" height="14" viewBox="0 0 14 14"><circle cx="6" cy="6" r="5" fill="none" stroke="#6b7486" stroke-width="1.05"/><path d="M9.6 9.6 L13 13" stroke="#6b7486" stroke-width="1.2"/><path d="M3.8 6 H8.2" stroke="#6b7486" stroke-width="1"/></svg>
<svg class="abs" style="left:1429.5px;top:602px" width="14" height="14" viewBox="0 0 14 14"><circle cx="6" cy="6" r="5" fill="none" stroke="#6b7486" stroke-width="1.05"/><path d="M9.6 9.6 L13 13" stroke="#6b7486" stroke-width="1.2"/><path d="M3.8 6 H8.2" stroke="#6b7486" stroke-width="1"/></svg>
<svg class="abs" style="left:1470.5px;top:602px" width="14" height="14" viewBox="0 0 14 14"><circle cx="6" cy="6" r="5" fill="none" stroke="#6b7486" stroke-width="1.05"/><path d="M9.6 9.6 L13 13" stroke="#6b7486" stroke-width="1.2"/></svg>
<svg class="abs" style="left:1511.5px;top:602px" width="14" height="14" viewBox="0 0 14 14"><circle cx="6" cy="6" r="5" fill="none" stroke="#6b7486" stroke-width="1.05"/><path d="M9.6 9.6 L13 13" stroke="#6b7486" stroke-width="1.2"/><path d="M3.8 6 H8.2" stroke="#6b7486" stroke-width="1"/><path d="M6 3.8 V8.2" stroke="#6b7486" stroke-width="1"/></svg>
<div class="t" style="left:1684.7px;top:603px;font-size:13px;font-weight:400;color:#2d3748;-webkit-text-stroke:0.35px #2d3748">Périodes</div>
<div class="abs" style="left:328px;top:639px;width:1539px;height:1px;background:#e5e8ed"></div>
<div class="t" style="left:341.5px;top:659px;font-size:13.2px;font-weight:400;color:#2d3748;-webkit-text-stroke:0.3px #2d3748">Association</div>
<div class="t" style="right:995.5px;top:660px;font-size:12.9px;font-weight:400;color:#2d3748;-webkit-text-stroke:0.3px #2d3748">Prévu</div>
<div class="t" style="right:756.5px;top:660px;font-size:12.9px;font-weight:400;color:#2d3748;-webkit-text-stroke:0.3px #2d3748">Expédié</div>
<div class="t" style="right:575.7px;top:660px;font-size:12.9px;font-weight:400;color:#2d3748;-webkit-text-stroke:0.3px #2d3748">Total</div>
<div class="t" style="right:380px;top:660px;font-size:12.9px;font-weight:400;color:#2d3748;-webkit-text-stroke:0.3px #2d3748">Solde</div>
<div class="abs" style="left:1737px;top:652px;width:60px;height:26px;border:1px dotted #b8bec8;border-radius:4px"></div>
<div class="t" style="right:126.5px;top:659px;font-size:13.6px;font-weight:400;color:#2d3748;">2025/50</div>
<svg class="abs" style="left:1829px;top:658px" width="15" height="15" viewBox="0 0 15 15"><path d="M7.5 0.5 V14.5 M0.5 7.5 H14.5" stroke="#6559e0" stroke-width="1.4"/></svg>
<div class="abs" style="left:328px;top:691px;width:1539px;height:1px;background:#e5e8ed"></div>
<div class="t" style="right:1191.5px;top:705px;font-size:12.6px;font-weight:400;color:#2d3748;">TOTAL</div>
<div class="t" style="right:995.5px;top:705px;font-size:12.8px;font-weight:400;color:#2d3748;-webkit-text-stroke:0.3px #2d3748">6531</div>
<div class="t" style="right:756.5px;top:705px;font-size:12.8px;font-weight:400;color:#2d3748;-webkit-text-stroke:0.3px #2d3748">-156</div>
<div class="t" style="right:575.7px;top:705px;font-size:12.8px;font-weight:400;color:#2d3748;-webkit-text-stroke:0.3px #2d3748">334</div>
<div class="t" style="right:380px;top:705px;font-size:12.8px;font-weight:400;color:#2d3748;-webkit-text-stroke:0.3px #2d3748">6197</div>
<div class="t" style="right:126px;top:705px;font-size:12.8px;font-weight:400;color:#2d3748;-webkit-text-stroke:0.3px #2d3748">490</div>
<div class="abs" style="left:328px;top:728px;width:1539px;height:1px;background:#e5e8ed"></div>
<div class="t" style="left:341.2px;top:745px;font-size:10.9px;font-weight:400;color:#a8137a;">#518</div>
<svg class="abs" style="left:368px;top:742.5px" width="10" height="13" viewBox="0 0 10 13"><path d="M0.5 0.3 H9.5 V13 H6.3 V10.2 H3.7 V13 H0.5 Z" fill="#a8127a"/><rect x="2.1" y="2" width="1.3" height="1.2" fill="#fff"/><rect x="2.1" y="4.5" width="1.3" height="1.2" fill="#fff"/><rect x="2.1" y="7" width="1.3" height="1.2" fill="#fff"/><rect x="4.35" y="2" width="1.3" height="1.2" fill="#fff"/><rect x="4.35" y="4.5" width="1.3" height="1.2" fill="#fff"/><rect x="4.35" y="7" width="1.3" height="1.2" fill="#fff"/><rect x="6.6" y="2" width="1.3" height="1.2" fill="#fff"/><rect x="6.6" y="4.5" width="1.3" height="1.2" fill="#fff"/><rect x="6.6" y="7" width="1.3" height="1.2" fill="#fff"/></svg>
<div class="t" style="left:381.7px;top:744px;font-size:12.0px;font-weight:400;color:#a8137a;">SVP AUVELAIS</div>
<div class="t" style="right:995.5px;top:744px;font-size:12.8px;font-weight:400;color:#2d3748;">167</div>
<div class="t" style="right:756.5px;top:744px;font-size:12.8px;font-weight:400;color:#2d3748;">-34</div>
<div class="t" style="right:575.7px;top:744px;font-size:12.8px;font-weight:400;color:#2d3748;">116</div>
<div class="t" style="right:380.5px;top:744px;font-size:12.8px;font-weight:400;color:#e6a135;font-style:italic">51</div>
<div class="abs" style="left:1562px;top:736px;width:235px;height:25.5px;border:1px dotted #c3c8d0;border-radius:4px;background:#fff"></div>
<div class="t" style="right:126.5px;top:744px;font-size:12.8px;font-weight:400;color:#2d3748;">150</div>
<div class="abs" style="left:328px;top:769px;width:1539px;height:1px;background:#e5e8ed"></div>
<div class="t" style="left:341.2px;top:786px;font-size:10.9px;font-weight:400;color:#a8137a;">#519</div>
<svg class="abs" style="left:368px;top:783.5px" width="10" height="13" viewBox="0 0 10 13"><path d="M0.5 0.3 H9.5 V13 H6.3 V10.2 H3.7 V13 H0.5 Z" fill="#a8127a"/><rect x="2.1" y="2" width="1.3" height="1.2" fill="#fff"/><rect x="2.1" y="4.5" width="1.3" height="1.2" fill="#fff"/><rect x="2.1" y="7" width="1.3" height="1.2" fill="#fff"/><rect x="4.35" y="2" width="1.3" height="1.2" fill="#fff"/><rect x="4.35" y="4.5" width="1.3" height="1.2" fill="#fff"/><rect x="4.35" y="7" width="1.3" height="1.2" fill="#fff"/><rect x="6.6" y="2" width="1.3" height="1.2" fill="#fff"/><rect x="6.6" y="4.5" width="1.3" height="1.2" fill="#fff"/><rect x="6.6" y="7" width="1.3" height="1.2" fill="#fff"/></svg>
<div class="t" style="left:381.7px;top:785px;font-size:12.0px;font-weight:400;color:#a8137a;">LE FOUILLIS</div>
<div class="t" style="right:995.5px;top:785px;font-size:12.8px;font-weight:400;color:#2d3748;">39</div>
<div class="t" style="right:756.5px;top:785px;font-size:12.8px;font-weight:400;color:#2d3748;">-8</div>
<div class="t" style="right:575.7px;top:785px;font-size:12.8px;font-weight:400;color:#2d3748;">39</div>
<div class="t" style="right:380.5px;top:785px;font-size:12.8px;font-weight:400;color:#2f8a3c;">0</div>
<div class="abs" style="left:1562px;top:777px;width:235px;height:25.5px;border:1px dotted #c3c8d0;border-radius:4px;background:#fff"></div>
<div class="t" style="right:126.5px;top:785px;font-size:12.8px;font-weight:400;color:#2d3748;">47</div>
<div class="abs" style="left:328px;top:810px;width:1539px;height:1px;background:#e5e8ed"></div>
<div class="t" style="left:341.2px;top:827px;font-size:10.9px;font-weight:400;color:#a8137a;">#520</div>
<svg class="abs" style="left:368px;top:824.5px" width="10" height="13" viewBox="0 0 10 13"><path d="M0.5 0.3 H9.5 V13 H6.3 V10.2 H3.7 V13 H0.5 Z" fill="#a8127a"/><rect x="2.1" y="2" width="1.3" height="1.2" fill="#fff"/><rect x="2.1" y="4.5" width="1.3" height="1.2" fill="#fff"/><rect x="2.1" y="7" width="1.3" height="1.2" fill="#fff"/><rect x="4.35" y="2" width="1.3" height="1.2" fill="#fff"/><rect x="4.35" y="4.5" width="1.3" height="1.2" fill="#fff"/><rect x="4.35" y="7" width="1.3" height="1.2" fill="#fff"/><rect x="6.6" y="2" width="1.3" height="1.2" fill="#fff"/><rect x="6.6" y="4.5" width="1.3" height="1.2" fill="#fff"/><rect x="6.6" y="7" width="1.3" height="1.2" fill="#fff"/></svg>
<div class="t" style="left:381.7px;top:826px;font-size:12.0px;font-weight:400;color:#a8137a;">SVP BIESME</div>
<div class="t" style="right:995.5px;top:826px;font-size:12.8px;font-weight:400;color:#2d3748;">30</div>
<div class="t" style="right:756.5px;top:826px;font-size:12.8px;font-weight:400;color:#2d3748;">-6</div>
<div class="t" style="right:575.7px;top:826px;font-size:12.8px;font-weight:400;color:#2d3748;">30</div>
<div class="t" style="right:380.5px;top:826px;font-size:12.8px;font-weight:400;color:#2f8a3c;">0</div>
<div class="abs" style="left:1562px;top:818px;width:235px;height:25.5px;border:1px dotted #c3c8d0;border-radius:4px;background:#fff"></div>
<div class="t" style="right:126.5px;top:826px;font-size:12.8px;font-weight:400;color:#2d3748;">36</div>
<div class="abs" style="left:328px;top:851px;width:1539px;height:1px;background:#e5e8ed"></div>
<div class="t" style="left:341.2px;top:868px;font-size:10.9px;font-weight:400;color:#a8137a;">#550</div>
<svg class="abs" style="left:368px;top:865.5px" width="10" height="13" viewBox="0 0 10 13"><path d="M0.5 0.3 H9.5 V13 H6.3 V10.2 H3.7 V13 H0.5 Z" fill="#a8127a"/><rect x="2.1" y="2" width="1.3" height="1.2" fill="#fff"/><rect x="2.1" y="4.5" width="1.3" height="1.2" fill="#fff"/><rect x="2.1" y="7" width="1.3" height="1.2" fill="#fff"/><rect x="4.35" y="2" width="1.3" height="1.2" fill="#fff"/><rect x="4.35" y="4.5" width="1.3" height="1.2" fill="#fff"/><rect x="4.35" y="7" width="1.3" height="1.2" fill="#fff"/><rect x="6.6" y="2" width="1.3" height="1.2" fill="#fff"/><rect x="6.6" y="4.5" width="1.3" height="1.2" fill="#fff"/><rect x="6.6" y="7" width="1.3" height="1.2" fill="#fff"/></svg>
<div class="t" style="left:381.7px;top:867px;font-size:12.0px;font-weight:400;color:#a8137a;">SVP JAMBES</div>
<div class="t" style="right:995.5px;top:867px;font-size:12.8px;font-weight:400;color:#2d3748;">366</div>
<div class="t" style="right:756.5px;top:867px;font-size:12.8px;font-weight:400;color:#2d3748;">-76</div>
<div class="t" style="right:575.7px;top:867px;font-size:12.8px;font-weight:400;color:#2d3748;">145</div>
<div class="t" style="right:380.5px;top:867px;font-size:12.8px;font-weight:400;color:#e6a135;font-style:italic">221</div>
<div class="abs" style="left:1562px;top:859px;width:235px;height:25.5px;border:1px dotted #c3c8d0;border-radius:4px;background:#fff"></div>
<div class="t" style="right:126.5px;top:867px;font-size:12.8px;font-weight:400;color:#2d3748;">221</div>
<div class="abs" style="left:328px;top:892px;width:1539px;height:1px;background:#e5e8ed"></div>
<div class="t" style="left:341.2px;top:909px;font-size:10.9px;font-weight:400;color:#a8137a;">#551</div>
<svg class="abs" style="left:368px;top:906.5px" width="10" height="13" viewBox="0 0 10 13"><path d="M0.5 0.3 H9.5 V13 H6.3 V10.2 H3.7 V13 H0.5 Z" fill="#a8127a"/><rect x="2.1" y="2" width="1.3" height="1.2" fill="#fff"/><rect x="2.1" y="4.5" width="1.3" height="1.2" fill="#fff"/><rect x="2.1" y="7" width="1.3" height="1.2" fill="#fff"/><rect x="4.35" y="2" width="1.3" height="1.2" fill="#fff"/><rect x="4.35" y="4.5" width="1.3" height="1.2" fill="#fff"/><rect x="4.35" y="7" width="1.3" height="1.2" fill="#fff"/><rect x="6.6" y="2" width="1.3" height="1.2" fill="#fff"/><rect x="6.6" y="4.5" width="1.3" height="1.2" fill="#fff"/><rect x="6.6" y="7" width="1.3" height="1.2" fill="#fff"/></svg>
<div class="t" style="left:381.7px;top:908px;font-size:12.0px;font-weight:400;color:#a8137a;">SVP MALONNE</div>
<div class="t" style="right:995.5px;top:908px;font-size:12.8px;font-weight:400;color:#2d3748;">30</div>
<div class="t" style="right:756.5px;top:908px;font-size:12.8px;font-weight:400;color:#2d3748;">-6</div>
<div class="t" style="right:575.7px;top:908px;font-size:12.8px;font-weight:400;color:#2d3748;">30</div>
<div class="t" style="right:380.5px;top:908px;font-size:12.8px;font-weight:400;color:#2f8a3c;">0</div>
<div class="abs" style="left:1562px;top:900px;width:235px;height:25.5px;border:1px dotted #c3c8d0;border-radius:4px;background:#fff"></div>
<div class="t" style="right:126.5px;top:908px;font-size:12.8px;font-weight:400;color:#2d3748;">36</div>
<div class="abs" style="left:328px;top:933px;width:1539px;height:1px;background:#e5e8ed"></div>
<div class="t" style="left:341.2px;top:950px;font-size:10.9px;font-weight:400;color:#a8137a;">#552</div>
<svg class="abs" style="left:368px;top:947.5px" width="10" height="13" viewBox="0 0 10 13"><path d="M0.5 0.3 H9.5 V13 H6.3 V10.2 H3.7 V13 H0.5 Z" fill="#a8127a"/><rect x="2.1" y="2" width="1.3" height="1.2" fill="#fff"/><rect x="2.1" y="4.5" width="1.3" height="1.2" fill="#fff"/><rect x="2.1" y="7" width="1.3" height="1.2" fill="#fff"/><rect x="4.35" y="2" width="1.3" height="1.2" fill="#fff"/><rect x="4.35" y="4.5" width="1.3" height="1.2" fill="#fff"/><rect x="4.35" y="7" width="1.3" height="1.2" fill="#fff"/><rect x="6.6" y="2" width="1.3" height="1.2" fill="#fff"/><rect x="6.6" y="4.5" width="1.3" height="1.2" fill="#fff"/><rect x="6.6" y="7" width="1.3" height="1.2" fill="#fff"/></svg>
<div class="t" style="left:381.7px;top:949px;font-size:12.0px;font-weight:400;color:#a8137a;">SVP MORIALME</div>
<div class="t" style="right:995.5px;top:949px;font-size:12.8px;font-weight:400;color:#2d3748;">45</div>
<div class="t" style="right:756.5px;top:949px;font-size:12.8px;font-weight:400;color:#2d3748;">-9</div>
<div class="t" style="right:575.7px;top:949px;font-size:12.8px;font-weight:400;color:#2d3748;">-9</div>
<div class="t" style="right:380.5px;top:949px;font-size:12.8px;font-weight:400;color:#e6a135;font-style:italic">54</div>
<div class="abs" style="left:1562px;top:941px;width:235px;height:25.5px;border:1px dotted #c3c8d0;border-radius:4px;background:#fff"></div>
<div class="abs" style="left:328px;top:974px;width:1539px;height:1px;background:#e5e8ed"></div>
<div class="t" style="left:341.2px;top:991px;font-size:10.9px;font-weight:400;color:#a8137a;">#553</div>
<svg class="abs" style="left:368px;top:988.5px" width="10" height="13" viewBox="0 0 10 13"><path d="M0.5 0.3 H9.5 V13 H6.3 V10.2 H3.7 V13 H0.5 Z" fill="#a8127a"/><rect x="2.1" y="2" width="1.3" height="1.2" fill="#fff"/><rect x="2.1" y="4.5" width="1.3" height="1.2" fill="#fff"/><rect x="2.1" y="7" width="1.3" height="1.2" fill="#fff"/><rect x="4.35" y="2" width="1.3" height="1.2" fill="#fff"/><rect x="4.35" y="4.5" width="1.3" height="1.2" fill="#fff"/><rect x="4.35" y="7" width="1.3" height="1.2" fill="#fff"/><rect x="6.6" y="2" width="1.3" height="1.2" fill="#fff"/><rect x="6.6" y="4.5" width="1.3" height="1.2" fill="#fff"/><rect x="6.6" y="7" width="1.3" height="1.2" fill="#fff"/></svg>
<div class="t" style="left:381.7px;top:990px;font-size:12.0px;font-weight:400;color:#a8137a;">SVP JEMEPPE SUR SAMBRE</div>
<div class="t" style="right:995.5px;top:990px;font-size:12.8px;font-weight:400;color:#2d3748;">87</div>
<div class="t" style="right:756.5px;top:990px;font-size:12.8px;font-weight:400;color:#2d3748;">-17</div>
<div class="t" style="right:575.7px;top:990px;font-size:12.8px;font-weight:400;color:#2d3748;">-17</div>
<div class="t" style="right:380.5px;top:990px;font-size:12.8px;font-weight:400;color:#e6a135;font-style:italic">104</div>
<div class="abs" style="left:1562px;top:982px;width:235px;height:25.5px;border:1px dotted #c3c8d0;border-radius:4px;background:#fff"></div>
<div class="abs" style="left:328px;top:1015px;width:1539px;height:1px;background:#e5e8ed"></div>
<div class="t" style="left:341.2px;top:1032px;font-size:10.9px;font-weight:400;color:#a8137a;">#554</div>
<svg class="abs" style="left:368px;top:1029.5px" width="10" height="13" viewBox="0 0 10 13"><path d="M0.5 0.3 H9.5 V13 H6.3 V10.2 H3.7 V13 H0.5 Z" fill="#a8127a"/><rect x="2.1" y="2" width="1.3" height="1.2" fill="#fff"/><rect x="2.1" y="4.5" width="1.3" height="1.2" fill="#fff"/><rect x="2.1" y="7" width="1.3" height="1.2" fill="#fff"/><rect x="4.35" y="2" width="1.3" height="1.2" fill="#fff"/><rect x="4.35" y="4.5" width="1.3" height="1.2" fill="#fff"/><rect x="4.35" y="7" width="1.3" height="1.2" fill="#fff"/><rect x="6.6" y="2" width="1.3" height="1.2" fill="#fff"/><rect x="6.6" y="4.5" width="1.3" height="1.2" fill="#fff"/><rect x="6.6" y="7" width="1.3" height="1.2" fill="#fff"/></svg>
<div class="t" style="left:381.7px;top:1031px;font-size:12.0px;font-weight:400;color:#a8137a;">UNE MAIN TENDUE</div>
<div class="t" style="right:995.5px;top:1031px;font-size:12.8px;font-weight:400;color:#2d3748;">833</div>
<div class="t" style="right:756.5px;top:1031px;font-size:12.8px;font-weight:400;color:#2d3748;">0</div>
<div class="t" style="right:575.7px;top:1031px;font-size:12.8px;font-weight:400;color:#2d3748;">0</div>
<div class="t" style="right:380.5px;top:1031px;font-size:12.8px;font-weight:400;color:#e6a135;font-style:italic">833</div>
<div class="abs" style="left:1562px;top:1023px;width:235px;height:25.5px;border:1px dotted #c3c8d0;border-radius:4px;background:#fff"></div>
<div class="abs" style="left:328px;top:1056px;width:1539px;height:1px;background:#e5e8ed"></div>
<div class="t" style="left:341.2px;top:1073px;font-size:10.9px;font-weight:400;color:#a8137a;">#556</div>
<svg class="abs" style="left:368px;top:1070.5px" width="10" height="13" viewBox="0 0 10 13"><path d="M0.5 0.3 H9.5 V13 H6.3 V10.2 H3.7 V13 H0.5 Z" fill="#a8127a"/><rect x="2.1" y="2" width="1.3" height="1.2" fill="#fff"/><rect x="2.1" y="4.5" width="1.3" height="1.2" fill="#fff"/><rect x="2.1" y="7" width="1.3" height="1.2" fill="#fff"/><rect x="4.35" y="2" width="1.3" height="1.2" fill="#fff"/><rect x="4.35" y="4.5" width="1.3" height="1.2" fill="#fff"/><rect x="4.35" y="7" width="1.3" height="1.2" fill="#fff"/><rect x="6.6" y="2" width="1.3" height="1.2" fill="#fff"/><rect x="6.6" y="4.5" width="1.3" height="1.2" fill="#fff"/><rect x="6.6" y="7" width="1.3" height="1.2" fill="#fff"/></svg>
<div class="t" style="left:381.7px;top:1072px;font-size:12.0px;font-weight:400;color:#a8137a;">SVP SALZINNES</div>
<div class="t" style="right:995.5px;top:1072px;font-size:12.8px;font-weight:400;color:#2d3748;">208</div>
<div class="t" style="right:756.5px;top:1072px;font-size:12.8px;font-weight:400;color:#2d3748;">0</div>
<div class="t" style="right:575.7px;top:1072px;font-size:12.8px;font-weight:400;color:#2d3748;">0</div>
<div class="t" style="right:380.5px;top:1072px;font-size:12.8px;font-weight:400;color:#e6a135;font-style:italic">208</div>
<div class="abs" style="left:1562px;top:1064px;width:235px;height:25.5px;border:1px dotted #c3c8d0;border-radius:4px;background:#fff"></div>
<div class="abs" style="left:1841.4px;top:1021.4px;width:32px;height:32px;border-radius:50%;border:1px solid #cbc5f5;background:#fff"></div>
<svg class="abs" style="left:1851px;top:1030px" width="12" height="15" viewBox="0 0 12 15"><rect x="0.8" y="2.3" width="10.4" height="11.5" rx="1.8" fill="none" stroke="#6559e0" stroke-width="1.2"/><path d="M0.8 6 H11.2 M3.5 0.5 V3.5 M8.5 0.5 V3.5" stroke="#6559e0" stroke-width="1.2"/></svg>
<!-- SCROLLBAR -->
<div class="abs" style="left:1900px;top:109px;width:20px;height:971px;background:#f9f9fa"></div>
<svg class="abs" style="left:1903px;top:114px" width="15" height="12" viewBox="0 0 15 12"><path d="M7.5 1.5 L13.5 10 H1.5 Z" fill="#8a8a8a" stroke="#8a8a8a" stroke-width="1.5" stroke-linejoin="round"/></svg>
<div class="abs" style="left:1905px;top:132px;width:11px;height:270px;border-radius:5.5px;background:#8a8a8a"></div>
<svg class="abs" style="left:1903px;top:1065px" width="15" height="12" viewBox="0 0 15 12"><path d="M7.5 10.5 L13.5 2 H1.5 Z" fill="#8a8a8a" stroke="#8a8a8a" stroke-width="1.5" stroke-linejoin="round"/></svg>
</div></body></html>
